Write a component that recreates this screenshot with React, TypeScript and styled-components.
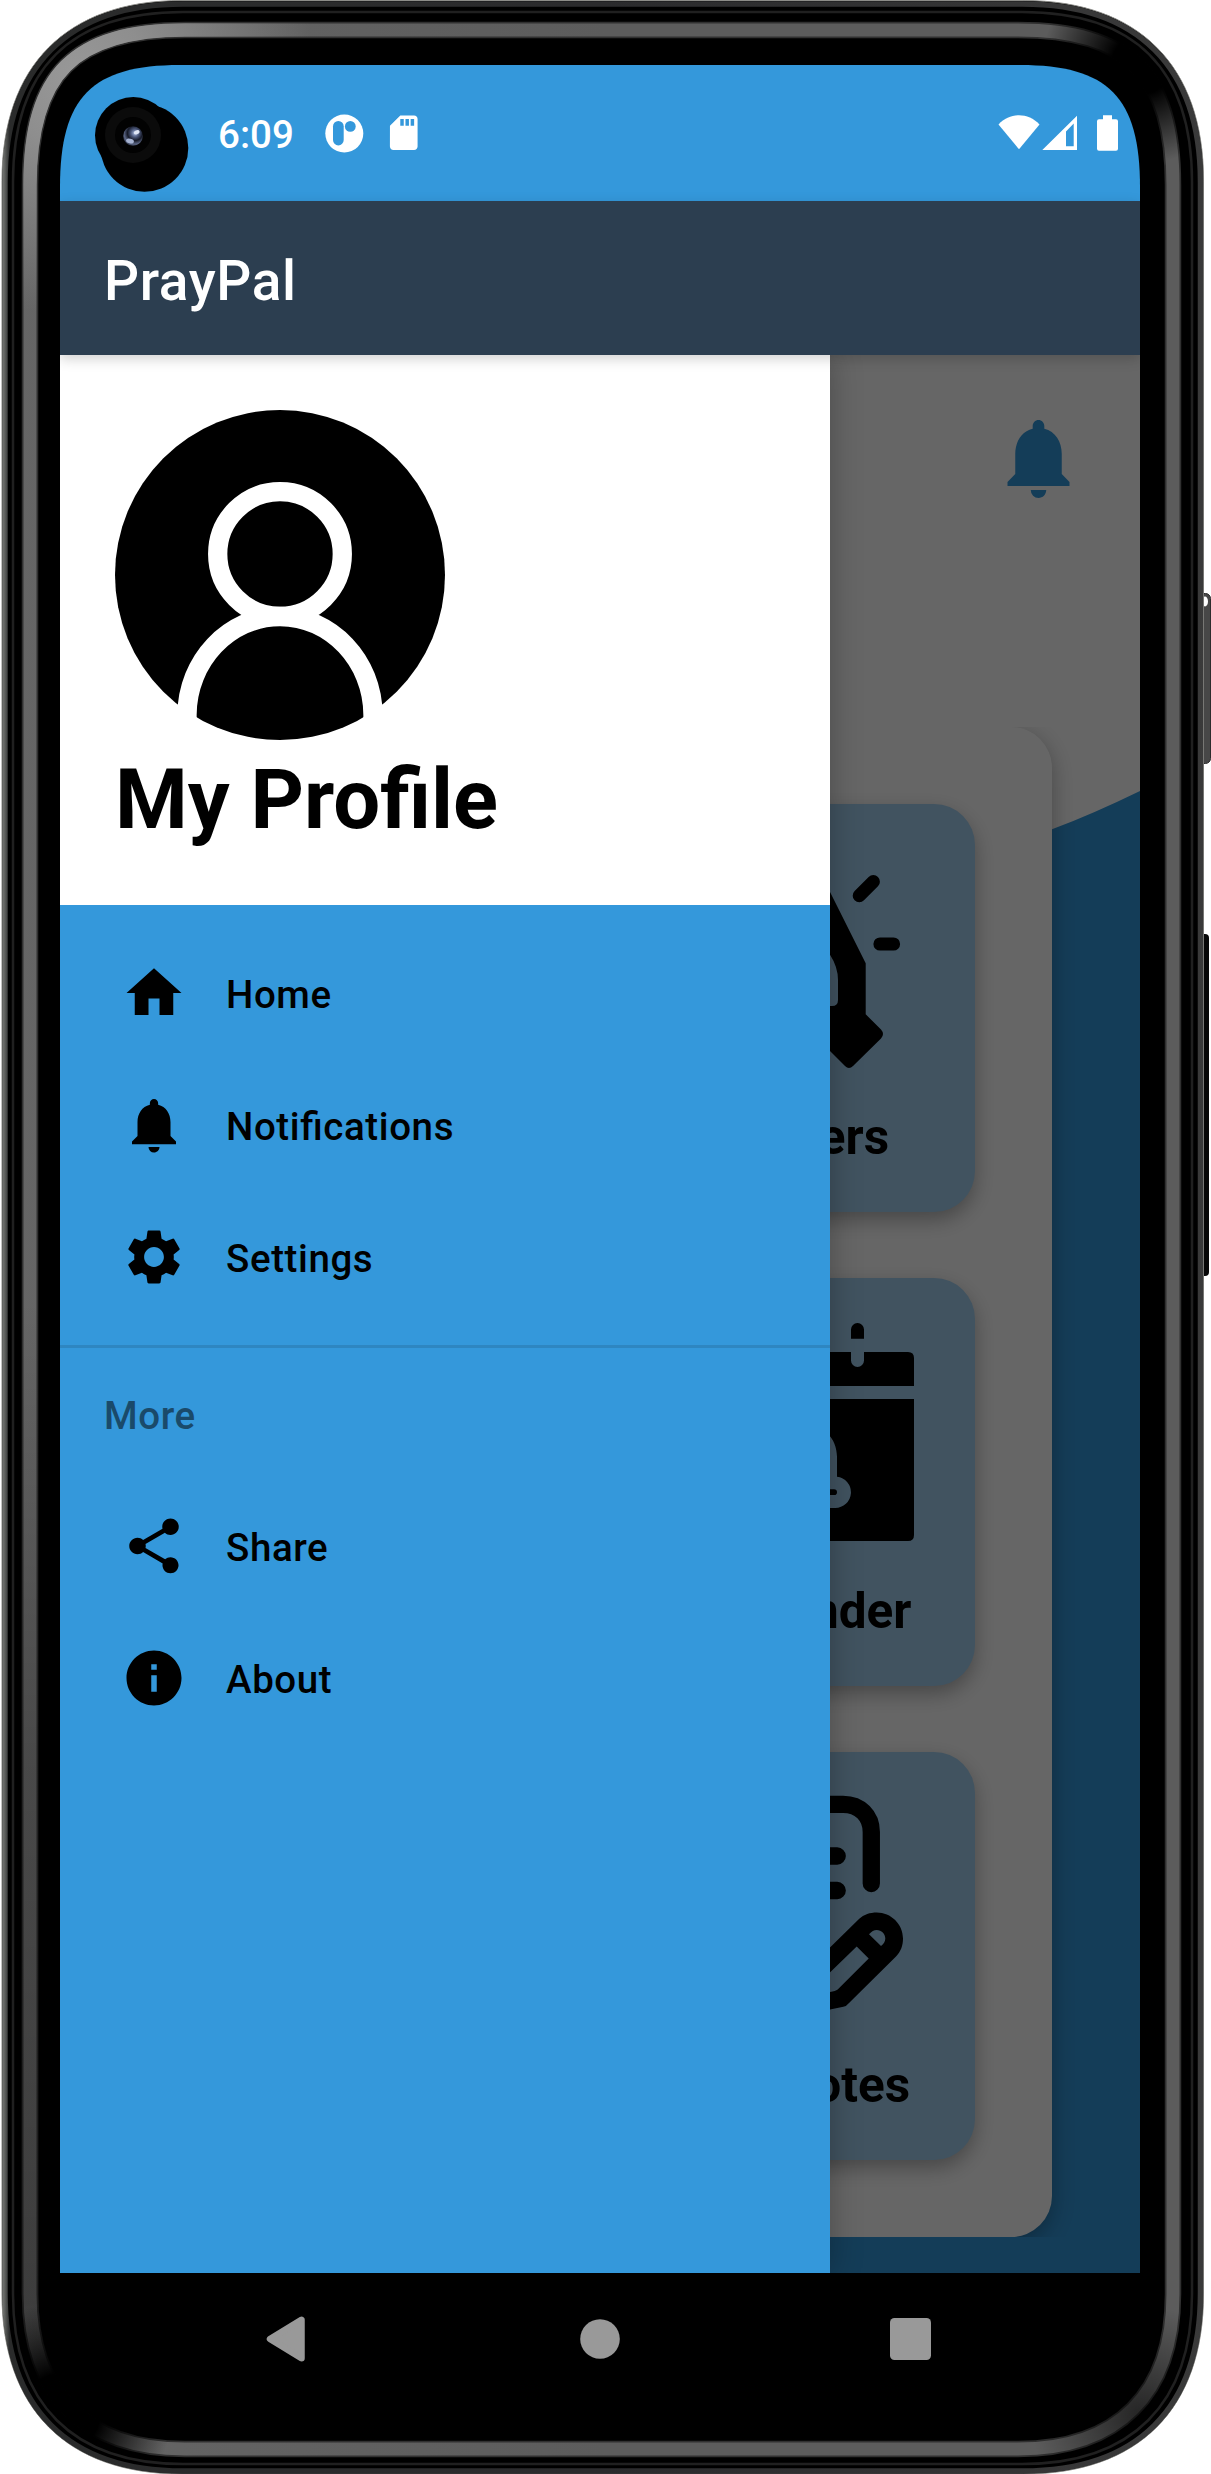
import React from "react";
import styled, { createGlobalStyle } from "styled-components";
import { MdHome, MdInfo, MdNotifications, MdSdCard, MdSettings, MdShare } from "react-icons/md";

const blue = "#3498db";

const Global = createGlobalStyle`
  body { margin: 0; background: #fff; font-family: Roboto, "Liberation Sans", sans-serif; }
  svg { display: block; flex: none; }
  * { box-sizing: border-box; }
`;

/* Rounded outline whose corners ease into the straight edges; kb tightens the bottom pair. */
const outline = (x0: number, y0: number, x1: number, y1: number, l: number, k: number, kb = k) =>
  `M${x0 + l} ${y0}H${x1 - l}C${x1 - k} ${y0} ${x1} ${y0 + k} ${x1} ${y0 + l}V${y1 - l}` +
  `C${x1} ${y1 - kb} ${x1 - kb} ${y1} ${x1 - l} ${y1}H${x0 + l}C${x0 + kb} ${y1} ${x0} ${y1 - kb} ${x0} ${y1 - l}` +
  `V${y0 + l}C${x0} ${y0 + k} ${x0 + k} ${y0} ${x0 + l} ${y0}Z`;

const Device = styled.div`
  position: relative;
  width: 1211px;
  height: 2474px;
  padding: 65px 71px 69px 60px;
  overflow: hidden;
`;

const Shell = styled.svg`
  position: absolute;
  inset: 0;
`;

const Screen = styled.div`
  position: relative;
  width: 1080px;
  height: 2340px;
  display: flex;
  flex-direction: column;
  clip-path: path("M0 122C0 32 32 0 120 0H960C1048 0 1080 32 1080 122V2340H0Z");
`;

const StatusBar = styled.div`
  flex: none;
  height: 136px;
  display: flex;
  align-items: flex-start;
  background: ${blue};
  padding: 32px 22px 0 35px;
`;

const Clock = styled.span`
  width: 105px;
  margin: 15px 0 0 28px;
  font-size: 38.5px;
  line-height: 46px;
  font-weight: 500;
  color: #fff;
`;

const StatusIcons = styled.div<{ $push?: boolean }>`
  display: flex;
  align-items: flex-start;
  margin-left: ${(p) => (p.$push ? "auto" : "0")};
  padding-top: 15px;
  color: #fff;

  > :nth-child(2) {
    margin-left: ${(p) => (p.$push ? "0" : "19px")};
  }
`;

const AppBar = styled.header`
  flex: none;
  position: relative;
  z-index: 3;
  height: 154px;
  display: flex;
  align-items: center;
  padding: 5px 44px 0;
  background: #2c3e50;
  box-shadow: 0 4px 12px rgba(0, 0, 0, 0.18);
`;

const Title = styled.h1`
  margin: 0;
  font-size: 55px;
  font-weight: 500;
  line-height: 66px;
  letter-spacing: 0.65px;
  color: #fff;
`;

const Stage = styled.div`
  position: relative;
  flex: none;
  height: 1918px;
  overflow: hidden;
`;

const Dashboard = styled.main`
  position: relative;
  height: 100%;
  display: flex;
  flex-direction: column;
  align-items: flex-end;
  padding: 55px 0 36px;
  background: #fff;
`;

const Wave = styled.svg`
  position: absolute;
  left: 0;
  top: 0;
`;

const BellButton = styled.div`
  position: relative;
  margin-right: 55px;
  color: ${blue};

  svg {
    width: 93px;
    height: 96px;
  }
`;

const PanelClip = styled.div`
  position: relative;
  margin: 221px 20px 0 0;
  padding: 0 68px;
  overflow: hidden;
`;

const Panel = styled.section`
  width: 904px;
  height: 1510px;
  display: flex;
  flex-direction: column;
  align-items: flex-end;
  gap: 66px;
  padding: 77px;
  border-radius: 41px;
  background: #fff;
  box-shadow: 0 6px 22px rgba(0, 0, 0, 0.3);
`;

const Tile = styled.article`
  width: 342px;
  height: 408px;
  display: flex;
  flex-direction: column;
  align-items: center;
  padding-top: 44px;
  border-radius: 41px;
  background: #a2cff0;
  box-shadow: 0 8px 20px rgba(0, 0, 0, 0.3);
`;

const TileLabel = styled.span`
  margin-top: 40px;
  font-size: 49.5px;
  line-height: 58px;
  font-weight: 700;
  color: #000;
`;

const Scrim = styled.div`
  position: absolute;
  inset: 0;
  background: rgba(0, 0, 0, 0.6);
`;

const Drawer = styled.nav`
  position: absolute;
  left: 0;
  top: 0;
  width: 770px;
  height: 100%;
  background: ${blue};
  box-shadow: 0 0 30px rgba(0, 0, 0, 0.28);
`;

const DrawerHeader = styled.div`
  height: 550px;
  padding: 55px;
  background: #fff;
`;

const ProfileName = styled.h2`
  margin: 12px 0 0;
  font-size: 83.2px;
  line-height: 96px;
  font-weight: 700;
  color: #000;
`;

const Group = styled.ul<{ $ruled?: boolean }>`
  list-style: none;
  margin: 0;
  padding: ${(p) => (p.$ruled ? "22px 0" : "0")};
  border-bottom: ${(p) => (p.$ruled ? "3px solid #2e86c1" : "0")};
`;

const Item = styled.li`
  height: 132px;
  display: flex;
  align-items: center;
  gap: 39px;
  padding-left: 61px;
  color: #000;
`;

const ItemLabel = styled.span<{ $muted?: boolean }>`
  padding-top: 3px;
  font-size: 38.5px;
  line-height: 46px;
  font-weight: 500;
  letter-spacing: 0.6px;
  font-feature-settings: "liga" 1;
  color: ${(p) => (p.$muted ? "#1a4a6a" : "#000")};
`;

const GroupTitle = styled.div`
  height: 132px;
  display: flex;
  align-items: center;
  padding-left: 44px;
`;

const SystemNav = styled.footer`
  flex: 1;
  display: flex;
  align-items: center;
  justify-content: space-between;
  padding: 0 209px 0 206px;
`;

const band = outline(30, 30, 1173, 2449, 155, 44, 55);

const PhoneShell = () => (
  <Shell width="1211" height="2474" viewBox="0 0 1211 2474" fill="none">
    <defs>
      <linearGradient id="rim" x1="0" y1="0" x2="1211" y2="0" gradientUnits="userSpaceOnUse">
        <stop offset="0.003" stopColor="#6c6e6b" />
        <stop offset="0.008" stopColor="#2a2b2b" />
        <stop offset="0.5" stopColor="#2b2b2d" />
        <stop offset="1" stopColor="#3a3a3a" />
      </linearGradient>
      <linearGradient id="band" x1="0" y1="0" x2="1211" y2="0" gradientUnits="userSpaceOnUse">
        <stop offset="0" stopColor="#666" />
        <stop offset="0.5" stopColor="#5c5c5c" />
        <stop offset="1" stopColor="#5c5c5c" />
      </linearGradient>
      <linearGradient id="leftShade" x1="0" y1="1300" x2="0" y2="2440" gradientUnits="userSpaceOnUse">
        <stop offset="0" stopColor="#000" stopOpacity="0" />
        <stop offset="0.4" stopColor="#000" stopOpacity="0.28" />
        <stop offset="0.88" stopColor="#000" stopOpacity="0.4" />
        <stop offset="1" stopColor="#000" stopOpacity="0" />
      </linearGradient>
      <radialGradient id="shine" cx="75" cy="75" r="240" gradientUnits="userSpaceOnUse">
        <stop offset="0" stopColor="#989898" />
        <stop offset="0.3" stopColor="#8e8e8e" />
        <stop offset="1" stopColor="#8e8e8e" stopOpacity="0" />
      </radialGradient>
      <radialGradient id="dimTop" cx="1142" cy="64" r="100" gradientUnits="userSpaceOnUse">
        <stop offset="0.3" stopColor="#000" />
        <stop offset="1" stopColor="#000" stopOpacity="0" />
      </radialGradient>
      <radialGradient id="dimBottom" cx="62" cy="2412" r="110" gradientUnits="userSpaceOnUse">
        <stop offset="0.35" stopColor="#000" />
        <stop offset="1" stopColor="#000" stopOpacity="0" />
      </radialGradient>
      <radialGradient id="dimCorner" cx="1140" cy="2415" r="110" gradientUnits="userSpaceOnUse">
        <stop offset="0" stopColor="#000" stopOpacity="0.6" />
        <stop offset="1" stopColor="#000" stopOpacity="0" />
      </radialGradient>
    </defs>
    <rect x="1198" y="593.5" width="12.5" height="170" rx="5" fill="#474747" stroke="#2c2c2c" />
    <ellipse cx="1205" cy="601.5" rx="3" ry="5" fill="#fff" />
    <rect x="1198" y="934" width="11" height="342" rx="4" fill="#070707" />
    <path d={outline(2, 0.5, 1203.5, 2474, 180, 65)} fill="#000" stroke="#8c8c88" strokeWidth="1" />
    <path d={outline(5, 4, 1200.5, 2471, 178, 63)} stroke="url(#rim)" strokeWidth="5.5" />
    <path d={outline(13, 12, 1192, 2464, 170, 57, 60)} stroke="#202020" strokeWidth="2.5" />
    <path d={band} stroke="#303030" strokeWidth="16.5" />
    <path d={band} stroke="url(#band)" strokeWidth="13" />
    <path d={band} stroke="url(#shine)" strokeWidth="13.500" />
    <path d="M30 1300V2294C30 2394 85 2449 185 2449" stroke="url(#leftShade)" strokeWidth="17" />
    <path d={band} stroke="url(#dimTop)" strokeWidth="18" />
    <path d={band} stroke="url(#dimBottom)" strokeWidth="18" />
    <path d={band} stroke="url(#dimCorner)" strokeWidth="18" />
  </Shell>
);

const Camera = () => (
  <svg width="95" height="96" viewBox="0 0 95 96">
    <defs>
      <radialGradient id="lens" cx="0.6" cy="0.35" r="0.7">
        <stop offset="0" stopColor="#a9bbe4" />
        <stop offset="0.3" stopColor="#4a5678" />
        <stop offset="0.55" stopColor="#161a28" />
        <stop offset="0.8" stopColor="#5a6584" />
        <stop offset="1" stopColor="#2a3042" />
      </radialGradient>
    </defs>
    <circle cx="38.3" cy="38.3" r="38.3" />
    <circle cx="49.5" cy="51" r="43.8" />
    <circle cx="38" cy="38" r="28" fill="#0b0b0b" />
    <circle cx="38" cy="38" r="18" fill="#020202" />
    <circle cx="38" cy="39" r="9.8" fill="url(#lens)" />
    <ellipse cx="41.5" cy="35.5" rx="3" ry="2" fill="#dfe6f5" transform="rotate(-25 41 35)" />
    <ellipse cx="35" cy="44" rx="4" ry="2.3" fill="#a6b3d2" transform="rotate(15 35 44)" />
  </svg>
);

const BadgeIcon = () => (
  <svg width="41" height="44" viewBox="0 0 41 44">
    <circle cx="21.3" cy="21.5" r="19" fill="#fff" />
    <rect x="10" y="9" width="10.7" height="24.4" rx="5.3" fill={blue} />
    <circle cx="27.3" cy="14.4" r="5.4" fill={blue} />
  </svg>
);

const WifiIcon = () => (
  <svg width="44" height="40" viewBox="0 0 44 40">
    <path d="M0.5 12.5C12 .3 30 .3 41.500 12.500L21 37.300Z" fill="#fff" />
  </svg>
);

const SignalIcon = () => (
  <svg width="55" height="40" viewBox="0 0 55 40">
    <path fillRule="evenodd" d="M35 3.800V38H0.300ZM31.700 11.500 24 19.500V34.200H31.700Z" fill="#fff" />
  </svg>
);

const BatteryIcon = () => (
  <svg width="21" height="40" viewBox="0 0 21 40">
    <path d="M6 3.300H15V7.300H19Q21 7.300 21 9.300V36.700Q21 38.700 19 38.700H2Q0 38.700 0 36.700V9.300Q0 7.300 2 7.300H6Z" fill="#fff" />
  </svg>
);

const Avatar = () => (
  <svg width="330" height="330" viewBox="0 0 330 330" fill="none" stroke="#fff" strokeWidth="19.3">
    <circle cx="165" cy="165" r="165" fill="#000" stroke="none" />
    <circle cx="165" cy="144" r="62.3" />
    <path d="M72 340V305C72 251 114 206.5 165 206.5S258 251 258 305V340" />
  </svg>
);

const handHalf = (
  <>
    <path
      fillRule="evenodd"
      d="M110 6Q116 4 118.5 9L171.7 115.3V166.3L187 181.5Q191 186 187 190.5L159 218Q155 222 151 218L110 177ZM110 84Q124 84 136 106.7Q144 119 144 132V152Q144 158 138 158H110Z"
    />
    <path d="M179.3 33.7 165.3 47.7M186 96H199.5" stroke="#000" strokeWidth="13.2" strokeLinecap="round" />
  </>
);

const PrayerIcon = () => (
  <svg width="220" height="220" viewBox="0 0 220 220">
    {handHalf}
    <g transform="translate(220 0) scale(-1 1)">{handHalf}</g>
  </svg>
);

const ReminderIcon = () => (
  <svg width="220" height="220" viewBox="0 0 220 220">
    <path d="M157 16.7V7.5a6.5 6.5 0 0 1 13 0V16.7ZM50 16.7V7.5a6.5 6.5 0 0 1 13 0V16.7Z" />
    <path d="M6 30H50V38.5a6.5 6.5 0 0 0 13 0V30H157V38.5a6.5 6.5 0 0 0 13 0V30H214Q220 30 220 36V64H0V36Q0 30 6 30Z" />
    <path
      fillRule="evenodd"
      d="M0 77H220V213Q220 219 214 219H6Q0 219 0 213ZM77 134.7V154.7A15.6 15.6 0 0 0 79 186H141A15.7 15.7 0 0 0 143 154.7V134.7C143 116 129 102 110 102S77 116 77 134.7ZM80 167.3H140Q143 167.3 143 170.2T140 173H80Q77 173 77 170.2T80 167.3Z"
    />
  </svg>
);

const NotesIcon = () => (
  <svg width="220" height="220" viewBox="0 0 220 220" overflow="visible" fill="none">
    <path
      d="M177.3 87.5V36C177.3 20 166 8.3 149 8.3H50C34 8.3 22 20 22 36V180C22 197 34 208 50 208H90M65 60H143.2M65 94.5H143.2"
      stroke="#000"
      strokeWidth="17.3"
      strokeLinecap="round"
    />
    <path
      fill="#000"
      fillRule="evenodd"
      d="M110 177 165 123C170 118.5 176 116.5 182.7 116.5C197 116.5 209 128 209 142.6C209 149.5 207 155.5 202 160.4L155 207Q152.5 210.3 149.3 210.8L136 213.6L105 217ZM124 188 162.7 150.4 174.7 162.6 143.7 193.6Q141.5 195.3 136 196L122 198ZM175 138.3C177.5 135.5 180 134 182.7 134C187.5 134 191.3 138 191.3 142.5C191.3 145.5 189.5 148 187 150Z"
    />
  </svg>
);

const tiles = [
  { label: "Prayers", icon: <PrayerIcon /> },
  { label: "Reminder", icon: <ReminderIcon /> },
  { label: "My Notes", icon: <NotesIcon /> },
];

const primary = [
  { label: "Home", Icon: MdHome },
  { label: "Notifications", Icon: MdNotifications },
  { label: "Settings", Icon: MdSettings },
];

const more = [
  { label: "Share", Icon: MdShare },
  { label: "About", Icon: MdInfo },
];

const renderItem = ({ label, Icon }: (typeof primary)[number]) => (
  <Item key={label}>
    <Icon size={66} />
    <ItemLabel>{label}</ItemLabel>
  </Item>
);

export default function App() {
  return (
    <>
      <Global />
      <Device>
        <PhoneShell />
        <Screen>
          <StatusBar>
            <Camera />
            <Clock>6:09</Clock>
            <StatusIcons>
              <BadgeIcon />
              <MdSdCard size={41.5} />
            </StatusIcons>
            <StatusIcons $push>
              <WifiIcon />
              <SignalIcon />
              <BatteryIcon />
            </StatusIcons>
          </StatusBar>
          <AppBar>
            <Title>PrayPal</Title>
          </AppBar>
          <Stage>
            <Dashboard>
              <Wave width="1080" height="1918" viewBox="0 0 1080 1918">
                <path d="M0 600Q700 590 992 474.3Q1032 459.4 1080 436V1918H0Z" fill={blue} />
              </Wave>
              <BellButton>
                <MdNotifications preserveAspectRatio="none" />
              </BellButton>
              <PanelClip>
                <Panel>
                  {tiles.map((t) => (
                    <Tile key={t.label}>
                      {t.icon}
                      <TileLabel>{t.label}</TileLabel>
                    </Tile>
                  ))}
                </Panel>
              </PanelClip>
            </Dashboard>
            <Scrim />
            <Drawer>
              <DrawerHeader>
                <Avatar />
                <ProfileName>My Profile</ProfileName>
              </DrawerHeader>
              <Group $ruled>{primary.map(renderItem)}</Group>
              <GroupTitle>
                <ItemLabel $muted>More</ItemLabel>
              </GroupTitle>
              <Group>{more.map(renderItem)}</Group>
            </Drawer>
          </Stage>
          <SystemNav>
            <svg width="44" height="48" viewBox="0 0 44 48">
              <path d="M4 24 35.5 4.8V43.2Z" fill="#999" stroke="#999" strokeWidth="6.5" strokeLinejoin="round" />
            </svg>
            <svg width="40" height="40" viewBox="0 0 40 40">
              <circle cx="20" cy="20" r="19.8" fill="#999" />
            </svg>
            <svg width="41" height="42" viewBox="0 0 41 42">
              <rect width="41" height="42" rx="4.5" fill="#999" />
            </svg>
          </SystemNav>
        </Screen>
      </Device>
    </>
  );
}
